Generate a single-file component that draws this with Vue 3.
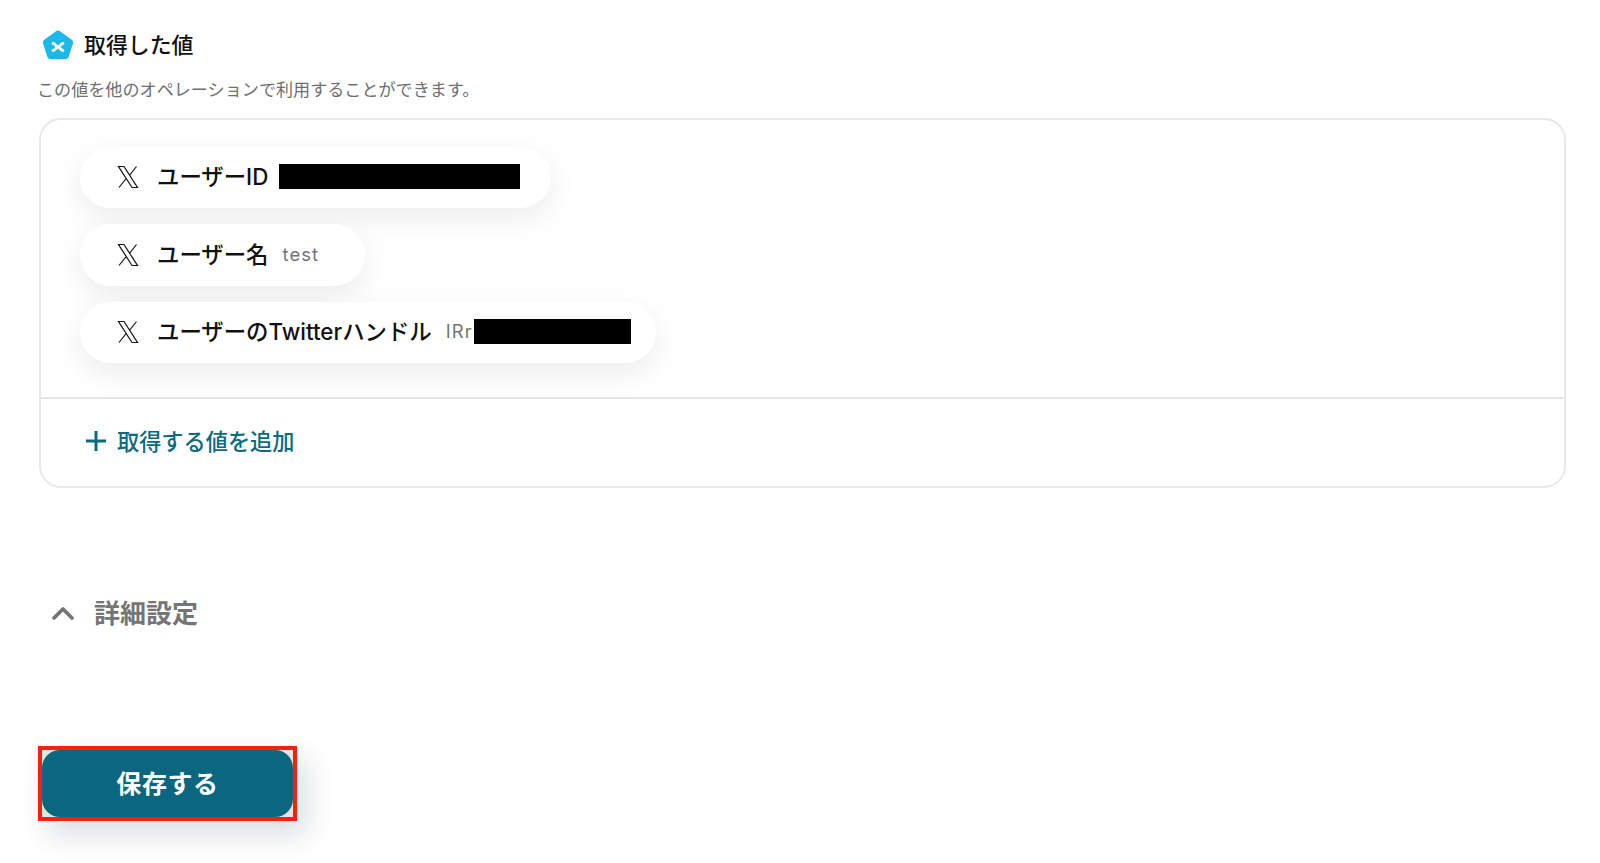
<template>
  <div class="page">
    <div class="heading">
      <svg class="logo" viewBox="0 0 32 32" width="32" height="32">
        <path d="M13.6 1.4a4 4 0 0 1 4.8 0l11 8a4 4 0 0 1 1.4 4.5l-4 12.6a4 4 0 0 1-3.8 2.8H9a4 4 0 0 1-3.8-2.800l-4-12.600a4 4 0 0 1 1.400-4.500z" fill="#1cb8e8" />
        <path d="M11 13.500c2.500 0 3 3.500 5 3.500s2.500-3.500 5-3.500M11 20.500c2.500 0 3-3.500 5-3.500s2.500 3.500 5 3.500" fill="none" stroke="#fff" stroke-width="2.800" stroke-linecap="round" />
      </svg>
      <span class="title">取得した値</span>
    </div>
    <p class="desc">この値を他のオペレーションで利用することができます。</p>

    <div class="card">
      <div class="pills">
        <div v-for="item in items" :key="item.label" class="pill" :style="{ paddingRight: item.pad + 'px' }">
          <svg class="x-icon" viewBox="0 0 24 24" width="24" height="24">
            <path d="M2.500 1.500H8L21.500 22.500H16zM20.500 1.500l-7.100 9M3 22.500l7.600-9.500" fill="none" stroke="#111" stroke-width="1.200" />
          </svg>
          <span class="label">{{ item.label }}</span>
          <span v-if="item.value" class="value">{{ item.value }}</span>
          <span v-if="item.mask" class="mask" :style="{ width: item.mask + 'px' }"></span>
        </div>
      </div>
      <div class="add">
        <svg viewBox="0 0 22 22" width="22" height="22">
          <path d="M11 1v20M1 11h20" stroke="#0b6a80" stroke-width="3" fill="none" />
        </svg>
        <span class="add-text">取得する値を追加</span>
      </div>
    </div>

    <div class="detail">
      <svg viewBox="0 0 24 16" width="24" height="16">
        <path d="M3 13 12 4l9 9" stroke="#757575" stroke-width="3.800" fill="none" stroke-linecap="round" stroke-linejoin="round" />
      </svg>
      <span class="detail-text">詳細設定</span>
    </div>

    <div class="save-mark">
      <button class="save">保存する</button>
    </div>
  </div>
</template>

<script setup>
const items = [
  { label: 'ユーザーID', mask: 241, pad: 31 },
  { label: 'ユーザー名', value: 'test', pad: 46 },
  { label: 'ユーザーのTwitterハンドル', value: 'IRr', mask: 157, pad: 25 }
]
</script>

<style>
html,
body {
  background: #fff;
  overflow: hidden;
}
</style>

<style scoped>
.page {
  height: 863px;
  box-sizing: border-box;
  padding: 30px 34px 0 38px;
  font-family: Inter, "Noto Sans CJK JP", sans-serif;
  color: #111;
}

.heading {
  display: flex;
  align-items: center;
  gap: 10px;
  padding-left: 4px;
  height: 32px;
}

.title {
  font-size: 21.9px;
  font-weight: 500;
  padding-bottom: 6px;
}

.desc {
  margin: 15px 0 0 -1px;
  font-size: 17.1px;
  line-height: 26px;
  color: #6f6f6f;
}

.card {
  margin-top: 15px;
  margin-left: 1px;
  border: 2px solid #e8e8e8;
  border-radius: 22px;
  height: 370px;
  box-sizing: border-box;
  display: flex;
  flex-direction: column;
}

.pills {
  height: 279px;
  box-sizing: border-box;
  padding: 26.5px 0 0 39px;
  display: flex;
  flex-direction: column;
  align-items: flex-start;
  gap: 16px;
  border-bottom: 2px solid #e6e6e6;
}

.pill {
  display: flex;
  align-items: center;
  height: 61.5px;
  box-sizing: border-box;
  padding-left: 36px;
  border-radius: 31px;
  background: #fff;
  box-shadow: 0 10px 30px rgba(0, 0, 0, 0.08);
}

.x-icon {
  margin-right: 17px;
  flex: none;
}

.label {
  font-size: 22.4px;
  font-weight: 500;
  white-space: nowrap;
  padding-bottom: 4px;
}

.value {
  margin-left: 14px;
  padding-bottom: 2px;
  font-size: 18.4px;
  letter-spacing: 1.1px;
  color: #757575;
}

.mask {
  height: 25px;
  background: #000;
  margin: 0 0 2px 11px;
}

.value + .mask {
  margin-left: 1px;
}

.add {
  flex: 1;
  display: flex;
  align-items: center;
  gap: 10px;
  padding: 0 0 4px 44px;
  color: #0b6a80;
  font-size: 22.2px;
  font-weight: 500;
}

.add-text {
  padding-bottom: 2px;
}

.detail {
  margin-top: 104px;
  display: flex;
  align-items: center;
  gap: 19px;
  padding-left: 13px;
  height: 40px;
  font-size: 26px;
  font-weight: 700;
  color: #757575;
}

.detail svg {
  margin-top: 2px;
}

.detail-text {
  padding-bottom: 2px;
}

.save-mark {
  margin-top: 114px;
  width: 259px;
  height: 75px;
  box-sizing: border-box;
  border: 4px solid #f5210f;
  background: #e4e4e4;
  box-shadow: 10px 14px 28px rgba(30, 50, 60, 0.16);
}

.save {
  display: block;
  width: 100%;
  height: 100%;
  border: 0;
  border-radius: 18px;
  background: #0a677f;
  color: #fff;
  font-family: inherit;
  font-size: 25px;
  font-weight: 700;
  letter-spacing: 0.6px;
  padding: 0 0 4px;
}
</style>
